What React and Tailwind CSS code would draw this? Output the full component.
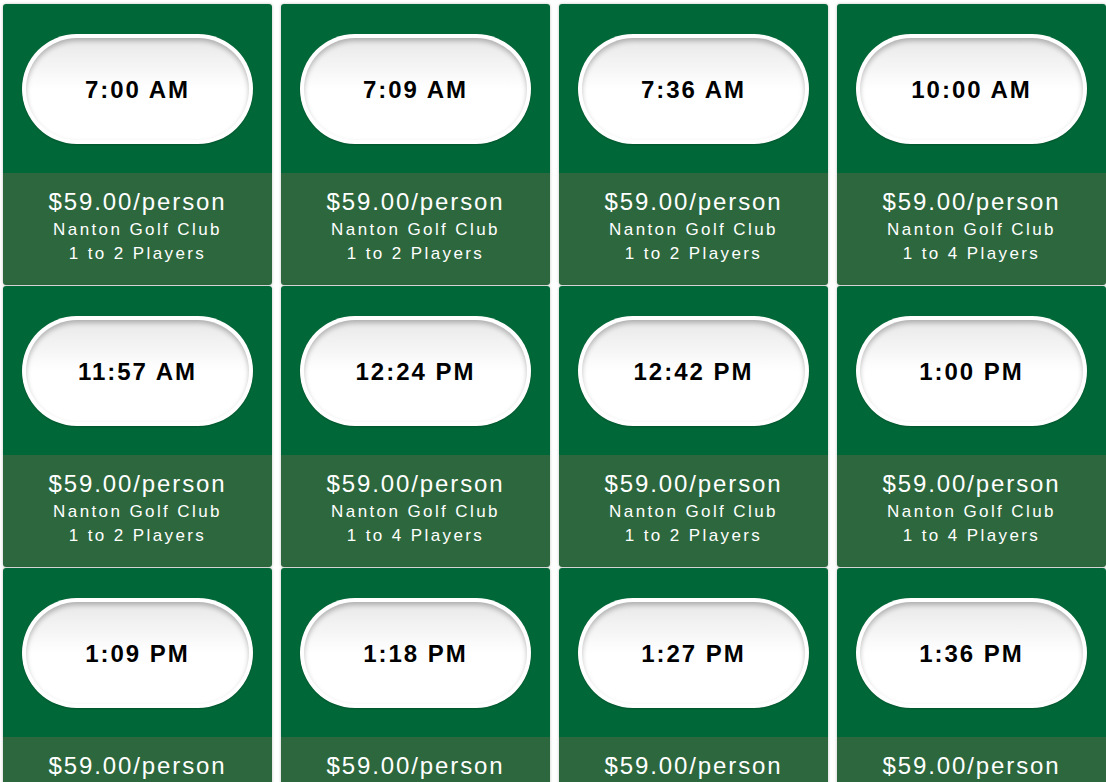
import React from 'react';

const teeTimes = [
  { time: '7:00 AM', players: '1 to 2 Players' },
  { time: '7:09 AM', players: '1 to 2 Players' },
  { time: '7:36 AM', players: '1 to 2 Players' },
  { time: '10:00 AM', players: '1 to 4 Players' },
  { time: '11:57 AM', players: '1 to 2 Players' },
  { time: '12:24 PM', players: '1 to 4 Players' },
  { time: '12:42 PM', players: '1 to 2 Players' },
  { time: '1:00 PM', players: '1 to 4 Players' },
  { time: '1:09 PM', players: '1 to 2 Players' },
  { time: '1:18 PM', players: '1 to 4 Players' },
  { time: '1:27 PM', players: '1 to 2 Players' },
  { time: '1:36 PM', players: '1 to 4 Players' },
];

const TeeTimeCard = ({ time, players }) => (
  <div className="h-[281px] rounded-[3px] overflow-hidden shadow-[0_0_3px_rgba(0,0,0,0.25)]">
    <div className="h-[169px] bg-[#006838] px-[19px] pt-[30px]">
      <div className="h-[110px] rounded-full bg-white p-[4px] shadow-[0_1px_2px_rgba(0,0,0,0.2)]">
        <div className="h-full rounded-full bg-gradient-to-b from-[#e8e8e8] via-white to-white shadow-[inset_0_3px_5px_rgba(0,0,0,0.25)] flex items-center justify-center">
          <span className="text-[24px] font-bold tracking-[2px] mt-[2px] text-black">{time}</span>
        </div>
      </div>
    </div>
    <div className="h-[112px] bg-[#2d673d] text-white text-center pt-[14px]">
      <div className="text-[24px] leading-[30px] tracking-[1.9px]">$59.00/person</div>
      <div className="text-[17px] leading-[24px] tracking-[2.4px] mt-[1px]">Nanton Golf Club</div>
      <div className="text-[17px] leading-[24px] tracking-[2.4px]">{players}</div>
    </div>
  </div>
);

export default function App() {
  return (
    <div className="bg-white h-screen overflow-hidden" style={{ fontFamily: '"Liberation Sans", Arial, sans-serif' }}>
      <div className="grid grid-cols-[269px_269px_269px_269px] gap-x-[9px] gap-y-[1px] pl-[3px] pt-[4px]">
        {teeTimes.map((t) => (
          <TeeTimeCard key={t.time} time={t.time} players={t.players} />
        ))}
      </div>
    </div>
  );
}
